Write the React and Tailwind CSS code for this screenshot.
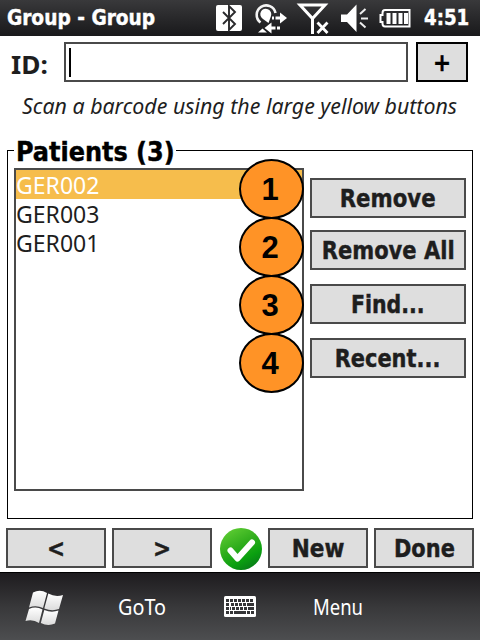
import React from 'react';

const FACE = "font-['DejaVu_Sans_Condensed','DejaVu_Sans',sans-serif] [font-stretch:condensed]";
const BOLD = `${FACE} font-bold [-webkit-text-stroke:0.4px]`;
const REG = "font-['Noto_Sans',sans-serif]";

function Button({ className = '', textClass = '', children }) {
  return (
    <button className={`flex h-10 shrink-0 items-center justify-center whitespace-nowrap border-2 border-[#4a4a4a] bg-[#dedede] pt-0.5 text-2xl leading-none text-[#1e1e1e] ${BOLD} ${className}`}>
      <span className={textClass}>{children}</span>
    </button>
  );
}

function StatusIcons() {
  return (
    <svg className="h-9 w-[200px] shrink-0" viewBox="214 0 200 36" fill="none">
      <rect x="216" y="5" width="26" height="26" rx="2" fill="#fff" />
      <path d="M223 12l12 12-6 6V6l6 6-12 12" stroke="#2a2a2c" strokeWidth="1.900" />
      <path d="M260.500 22.500A9.500 9.500 0 1 1 275.500 13" stroke="#f4f4f4" strokeWidth="2.600" />
      <path d="M263 19A5.500 5.500 0 1 1 271 16L268.500 23z" fill="#fff" />
      <path d="M258 32.500l4.500-4 4.500 4z" fill="#fff" />
      <path d="M272 18h2M275.500 18h5" stroke="#fff" strokeWidth="3" />
      <path d="M280 12.500l7 5.500-7 5.500z" fill="#fff" />
      <path d="M264.500 28l7-5.500v4h4v3h-4V33.500zM277 26.500h3v3h-3z" fill="#fff" />
      <path d="M300 5h25L312.500 18.500zM312.500 17v17" stroke="#fff" strokeWidth="3" />
      <path d="M317.500 22.500l10 10.500M327.500 22.500l-10 10.500" stroke="#fff" strokeWidth="2.800" />
      <path d="M341 14.500h6l9.500-10v27.500l-9.500-10h-6z" fill="#fff" />
      <path d="M360 14l5.500-5M361 18.500h7M360 22.500l5.500 5" stroke="#eee" strokeWidth="2" />
      <path d="M385 10h24.500v16.500H385q-2.500 0-2.500-3v-1.500h-2v-7h2v-2q0-3 2.500-3z" stroke="#fff" strokeWidth="2" />
      <path d="M388.500 13v11M394.500 13v11M400.500 13v11M406 13v11" stroke="#fff" strokeWidth="4" />
    </svg>
  );
}

function WindowsFlag() {
  return (
    <svg className="h-9 w-10" viewBox="24 586 40 36">
      <defs>
        <linearGradient id="flag" x1="0" y1="0" x2="0" y2="1">
          <stop offset="0" stopColor="#fff" />
          <stop offset="1" stopColor="#dcdcdc" />
        </linearGradient>
      </defs>
      <g fill="url(#flag)">
        <path d="M33 589.500q7-3.500 14 0.500l-4 15q-7-3-14-0.500z" />
        <path d="M48.300 590.500q7 4 14.700 1.500l-4 14q-7 2.500-14.700-0.500z" />
        <path d="M29 606q7-3 13.500 0.500l-3.500 13.500q-6-4-13.500-2z" />
        <path d="M44.300 607q7 3 14.200 0.500l-3.500 13q-7 3-14.200-0.500z" />
      </g>
    </svg>
  );
}

function Keyboard() {
  return (
    <svg className="h-[21px] w-8" viewBox="0 0 32 21">
      <rect width="32" height="21" rx="1.500" fill="#fff" />
      <g stroke="#353537" strokeWidth="3">
        <path d="M2 4.500h28" strokeDasharray="3 1" />
        <path d="M2 8.500h4M7 8.500h15" strokeDasharray="3 1" />
        <path d="M23 8.500h7" />
        <path d="M2 12.500h5M8 12.500h15" strokeDasharray="3 1" />
        <path d="M24 12.500h6" />
        <path d="M2 16.500h3M6 16.500h3M10 16.500h12M23 16.500h3M27 16.500h3" />
      </g>
    </svg>
  );
}

function Check() {
  return (
    <svg className="h-[42px] w-[42px] shrink-0" viewBox="0 0 42 42">
      <defs>
        <linearGradient id="green" x1="0.150" y1="0" x2="0.700" y2="1">
          <stop offset="0" stopColor="#62cf35" />
          <stop offset="0.450" stopColor="#30ad1c" />
          <stop offset="0.750" stopColor="#0aa010" />
          <stop offset="1" stopColor="#087c18" />
        </linearGradient>
      </defs>
      <circle cx="21" cy="21" r="21" fill="url(#green)" />
      <path d="M10.500 22.500l7 8L32 14.500" fill="none" stroke="#fff" strokeWidth="6" strokeLinecap="round" strokeLinejoin="round" />
    </svg>
  );
}

export default function App() {
  return (
    <div className="flex h-[640px] w-[480px] flex-col overflow-hidden bg-white">
      <header className={`flex h-9 shrink-0 items-center bg-linear-to-b from-[#39393b] to-[#19191b] text-white ${BOLD}`}>
        <h1 className="w-[214px] origin-left scale-x-[0.985] whitespace-nowrap pl-[7px] text-[21px] leading-none">Group - Group</h1>
        <StatusIcons />
        <span className="ml-2.5 origin-left scale-x-[0.92] text-[22px] leading-none">4:51</span>
      </header>

      <main className="flex h-[536px] shrink-0 flex-col">
        <div className="mt-1.5 flex h-10 shrink-0 items-center">
          <label className="w-16 pl-[11px] pt-1 font-['Noto_Sans',sans-serif] text-[25px] font-bold leading-none text-[#1e1e1e]">
            <span className="inline-block origin-left scale-x-105">ID:</span>
          </label>
          <div className="mr-2 h-10 w-[344px] border-2 border-[#4a4a4a] pl-[3px] pt-1">
            <div className="h-[29px] w-0.5 bg-black" />
          </div>
          <Button className="w-[52px] border-black text-black">+</Button>
        </div>
        <p className={`ml-[22px] mt-[7px] h-[34px] w-[460px] origin-left scale-x-[0.97] whitespace-nowrap text-[22px] italic leading-8 text-[#1e1e1e] ${REG}`}>
          Scan a barcode using the large yellow buttons
        </p>

        <section className="ml-[7px] mt-[27px] flex h-[369px] w-[466px] shrink-0 flex-col border border-black">
          <h2 className={`-mt-[15px] ml-1.5 flex h-[30px] w-[162px] items-center whitespace-nowrap bg-white pl-0.5 pt-0.5 text-[26px] leading-none ${BOLD}`}>
            <span className="origin-left scale-x-[1.025]">Patients (3)</span>
          </h2>
          <div className="ml-1.5 mt-0.5 flex">
            <ul className={`relative h-[323px] w-[290px] border-2 border-[#4a4a4a] text-2xl leading-[29px] text-[#1e1e1e] ${REG}`}>
              <li className="h-[29px] bg-[#f6bd4c] text-white"><span className="inline-block origin-left scale-x-[0.96]">GER002</span></li>
              <li className="h-[29px]"><span className="inline-block origin-left scale-x-[0.96]">GER003</span></li>
              <li className="h-[29px]"><span className="inline-block origin-left scale-x-[0.96]">GER001</span></li>
              <li className="absolute -top-[11px] left-[223px]">
                {[1, 2, 3, 4].map((n) => (
                  <span key={n} className="-mb-0.5 flex h-[60px] w-[65px] items-center justify-center rounded-[50%] border-2 border-black bg-[#ff9326] pr-[3px] font-['Liberation_Sans',sans-serif] text-[31px] font-bold leading-none text-black">
                    {n}
                  </span>
                ))}
              </li>
            </ul>
            <div className="ml-1.5 mt-2.5 flex flex-col">
              <Button className="mb-3 w-[156px]" textClass="scale-x-[0.985]">Remove</Button>
              <Button className="mb-3.5 w-[156px]" textClass="scale-x-[0.975]">Remove All</Button>
              <Button className="mb-3.5 w-[156px]" textClass="scale-x-95">Find...</Button>
              <Button className="w-[156px]" textClass="scale-x-[0.97]">Recent...</Button>
            </div>
          </div>
        </section>

        <div className="ml-1.5 mt-[9px] flex shrink-0">
          <Button className="mr-1.5 w-[100px]">&lt;</Button>
          <Button className="mr-2 w-[100px]">&gt;</Button>
          <Check />
          <Button className="ml-1.5 mr-1.5 w-[100px]">New</Button>
          <Button className="w-[100px]" textClass="scale-x-[0.97]">Done</Button>
        </div>
      </main>

      <footer className={`flex h-[68px] shrink-0 items-center border-t border-black bg-linear-to-b from-[#1e1c1f] via-[#38383a] to-[#4d4e50] text-[22px] leading-none text-white ${REG}`}>
        <div className="w-[118px] pl-6"><WindowsFlag /></div>
        <span className="w-[106px] origin-left scale-x-[0.9] -mt-0.5">GoTo</span>
        <Keyboard />
        <span className="-mt-0.5 ml-[57px] origin-left scale-x-[0.84]">Menu</span>
      </footer>
    </div>
  );
}
